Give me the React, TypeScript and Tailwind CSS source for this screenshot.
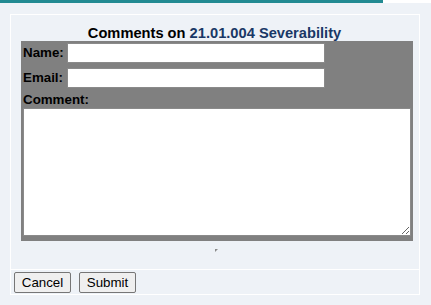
export default function App() {
  return (
    <div className="w-[431px] h-[305px] bg-[#eef2f7] overflow-hidden font-['Liberation_Sans',Arial,sans-serif] text-black">
      <div className="flex h-[3px]">
        <div className="w-[383px] bg-[#228a92]" />
        <div className="flex-1 bg-white" />
      </div>
      <div className="ml-[10px] mt-[11px] w-[410px] border border-white">
        <div className="pt-[10px] pl-[10px] pr-[6px]">
          <h2 className="text-center text-[14.67px] leading-4 font-bold pr-[5px]">
            Comments on <span className="text-[#193866]">21.01.004 Severability</span>
          </h2>
          <div className="bg-[#808080] px-[2px] pt-[2px] pb-[5px]">
            <div className="flex items-center h-[20px]">
              <label className="w-[44px] text-[13.33px] font-bold leading-4">Name:</label>
              <input className="w-[258px] h-[20px] bg-white border border-[#8a8a8a] outline-none" />
            </div>
            <div className="flex items-center h-[20px] mt-[5px]">
              <label className="w-[44px] text-[13.33px] font-bold leading-4">Email:</label>
              <input className="w-[258px] h-[20px] bg-white border border-[#8a8a8a] outline-none" />
            </div>
            <div className="mt-[4px] h-[16px] text-[13.33px] font-bold leading-4">Comment:</div>
            <textarea className="block w-[388px] h-[128px] bg-white border border-[#8a8a8a] outline-none resize" />
          </div>
          <div className="h-[28px] flex justify-center pt-[8px] pr-[1px]">
            <svg width="3" height="3" viewBox="0 0 3 3" className="block">
              <path d="M0 0H3L0 3Z" fill="#8a8a8a" />
            </svg>
          </div>
        </div>
        <div className="border-t border-white flex gap-[8px] pl-[3px] pt-[2px] pb-[1px]">
          <button className="w-[57px] h-[21px] bg-[#efefef] border border-[#767676] rounded-[2px] text-[13.33px] leading-4">
            Cancel
          </button>
          <button className="w-[57px] h-[21px] bg-[#efefef] border border-[#767676] rounded-[2px] text-[13.33px] leading-4">
            Submit
          </button>
        </div>
      </div>
    </div>
  );
}
